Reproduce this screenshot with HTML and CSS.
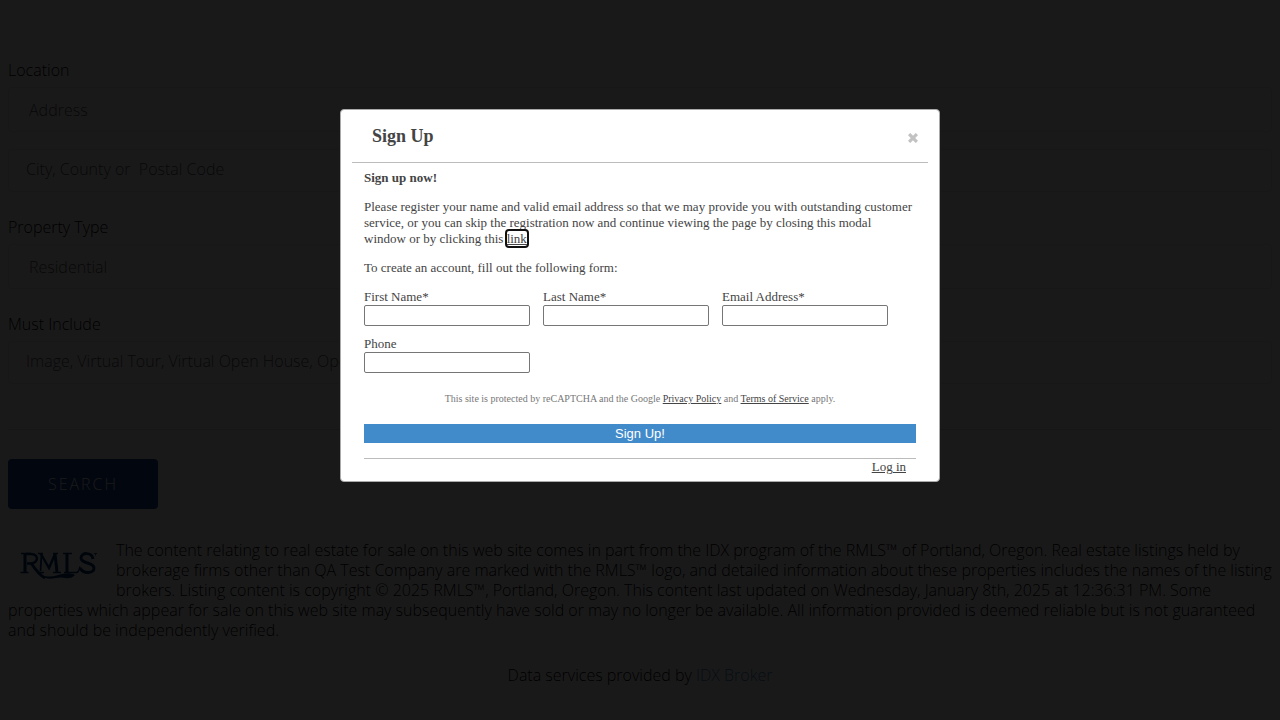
FILE: index.html
```html
<!DOCTYPE html>
<html lang="en">
<head>
<meta charset="utf-8">
<title>Property Search</title>
<link rel="stylesheet" href="styles.css">
</head>
<body>
<main class="page">
  <form class="search">
    <div class="group">
      <label class="group-label" for="address">Location</label>
      <input class="field field-inset" id="address" type="text" placeholder="Address">
      <input class="field field-city" type="text" aria-label="City, County or Postal Code" placeholder="City, County or&nbsp; Postal Code">
    </div>
    <div class="group">
      <label class="group-label" for="type">Property Type</label>
      <select class="field field-inset" id="type"><option>Residential</option></select>
    </div>
    <div class="group">
      <label class="group-label" for="include">Must Include</label>
      <input class="field" id="include" type="text" placeholder="Image, Virtual Tour, Virtual Open House, Open House">
    </div>
    <hr class="divider">
    <button class="search-button" type="button">SEARCH</button>
  </form>
  <div class="disclaimer">
    <svg class="rmls" viewBox="0 0 100 50" role="img" aria-label="RMLS">
      <g fill="none" stroke="#003878">
        <path stroke-width="3" d="M17 14v18M59 14v18"/>
        <path stroke-width="1.800" d="M32.500 31l1-17"/>
        <path stroke-width="3" d="M47 14l2 18"/>
        <path stroke-width="1.400" d="M13 13.500h10M12.500 32.500h8M30 13.500h5M29 32.500h7M45 32.500h8M45 13.500h5M55 13.500h9M56 32.500h13q2-1 3-6"/>
        <path stroke-width="2.400" d="M18 14h5c8 0 8 9-1 9.500h-3M33 14l8 14 6-14"/>
        <path stroke-width="3" d="M23 23q8 12 14 15"/>
        <path stroke-width="3" d="M85 19c-1-7-12-7-12-1 0 6 13 4 13 10 0 6-11 6-14 0"/>
      </g>
      <path fill="#003878" d="M33 35q8 3 17 0 9-3 15-1 3 1 1 2-3 3-9 2-4-1-9 0-8 2-13-1z"/>
      <path stroke="#003878" stroke-width="0.800" fill="none" d="M86 13.500h3M87.500 13.500v2"/>
    </svg>
    The content relating to real estate for sale on this web site comes in part from the IDX program of the RMLS™ of Portland, Oregon. Real estate listings held by brokerage firms other than QA Test Company are marked with the RMLS™ logo, and detailed information about these properties includes the names of the listing brokers. Listing content is copyright © 2025 RMLS™, Portland, Oregon. This content last updated on Wednesday, January 8th, 2025 at 12:36:31 PM. Some properties which appear for sale on this web site may subsequently have sold or may no longer be available. All information provided is deemed reliable but is not guaranteed and should be independently verified.
  </div>
  <p class="provider">Data services provided by <a class="provider-link" href="#">IDX Broker</a></p>
</main>

<div class="overlay">
  <section class="modal" role="dialog" aria-modal="true" aria-labelledby="modal-title">
    <header class="modal-header">
      <h1 class="modal-title" id="modal-title">Sign Up</h1>
      <button class="close" type="button" aria-label="Close">
        <svg class="close-icon" viewBox="0 0 10 10"><path d="M2.200 2.200l5.600 5.600M7.800 2.200l-5.600 5.600" stroke="#c2c2c2" stroke-width="3.200" stroke-linecap="square"/></svg>
      </button>
    </header>
    <div class="modal-body">
      <p class="text"><strong>Sign up now!</strong></p>
      <p class="text">Please register your name and valid email address so that we may provide you with outstanding customer service, or you can skip the registration now and continue viewing the page by closing this modal window or by clicking this <a class="link skip" href="#">link</a></p>
      <p class="text">To create an account, fill out the following form:</p>
      <form class="signup">
        <div class="fields">
          <div class="cell"><label for="first">First Name*</label><input class="input" id="first" type="text"></div>
          <div class="cell"><label for="last">Last Name*</label><input class="input" id="last" type="text"></div>
          <div class="cell"><label for="email">Email Address*</label><input class="input" id="email" type="email"></div>
          <div class="cell"><label for="phone">Phone</label><input class="input" id="phone" type="tel"></div>
        </div>
        <p class="captcha">This site is protected by reCAPTCHA and the Google <a class="link" href="#">Privacy Policy</a> and <a class="link" href="#">Terms of Service</a> apply.</p>
        <button class="submit" type="button">Sign Up!</button>
      </form>
      <footer class="modal-footer"><a class="link" href="#">Log in</a></footer>
    </div>
  </section>
</div>
</body>
</html>
```
FILE: styles.css
```css
* { box-sizing: border-box; }

body {
  margin: 0;
  background: #fff;
  color: #000;
  font: 300 16px/20px "Open Sans", "Noto Sans", sans-serif;
}

.page { padding: 60px 8px 0; }

.group { margin-bottom: 25px; }
.group-label { display: block; margin-bottom: 7px; }

.field {
  display: block;
  width: 100%;
  height: 43px;
  padding: 0 17px 4px;
  border: 1px solid #e6e6e6;
  border-radius: 4px;
  background: #fff;
  color: #555;
  font: inherit;
}
.field::placeholder { color: #555; opacity: 1; }
.field-inset { height: 45px; padding: 1px 20px 0; appearance: none; }
.field-city { margin-top: 17px; }

.divider {
  height: 1px;
  margin: 45px 0 29px;
  border: 0;
  background: #e0e0e0;
}

.search-button {
  display: block;
  width: 150px;
  height: 50px;
  padding: 0;
  border: 0;
  border-radius: 4px;
  background: #143c96;
  color: #fff;
  font: inherit;
  letter-spacing: 2px;
}

.disclaimer { margin-top: 31px; }
.rmls { float: left; width: 100px; height: 50px; margin: 0 8px 0 0; }

.provider { margin: 25px 0 0; text-align: center; }
.provider-link { color: #428bca; text-decoration: none; }

.overlay {
  position: fixed;
  inset: 0;
  padding-top: 109px;
  background: rgba(0, 0, 0, 0.9);
}

.modal {
  max-width: 600px;
  margin: 0 auto;
  padding: 0 11px 6px;
  border: 1px solid #aaa;
  border-radius: 4px;
  background: #fff;
  color: #444;
  font: 13px/16px "Liberation Serif", serif;
}

.modal-header {
  display: flex;
  justify-content: space-between;
  align-items: center;
  height: 53px;
  padding: 0 10px 0 20px;
  border-bottom: 1px solid #bbb;
}
.modal-title { margin: 0; font-size: 18px; line-height: 20px; }
.close { padding: 3px 0 0; border: 0; background: none; }
.close-icon { display: block; width: 10px; height: 10px; }

.modal-body { padding: 7px 12px 0; }
.text { margin: 0 0 13px; }
.link { color: #444; }
.skip { outline: 2px solid #101010; outline-offset: 0; border-radius: 2px; }

.fields {
  display: grid;
  grid-template-columns: repeat(3, 1fr);
  gap: 10px 13px;
  padding-right: 28px;
}
.cell label { display: block; }
.input {
  display: block;
  width: 100%;
  height: 21px;
  border: 1px solid #767676;
  border-radius: 2px;
  background: #fff;
}

.captcha {
  margin: 20px 0;
  color: #777;
  font-size: 10px;
  line-height: 11px;
  text-align: center;
}

.submit {
  display: block;
  width: 100%;
  height: 19px;
  padding: 0;
  border: 0;
  background: #428bca;
  color: #fff;
  font: 13px/19px "Liberation Sans", sans-serif;
}

.modal-footer {
  margin-top: 15px;
  padding-right: 10px;
  border-top: 1px solid #bbb;
  text-align: right;
}
```
